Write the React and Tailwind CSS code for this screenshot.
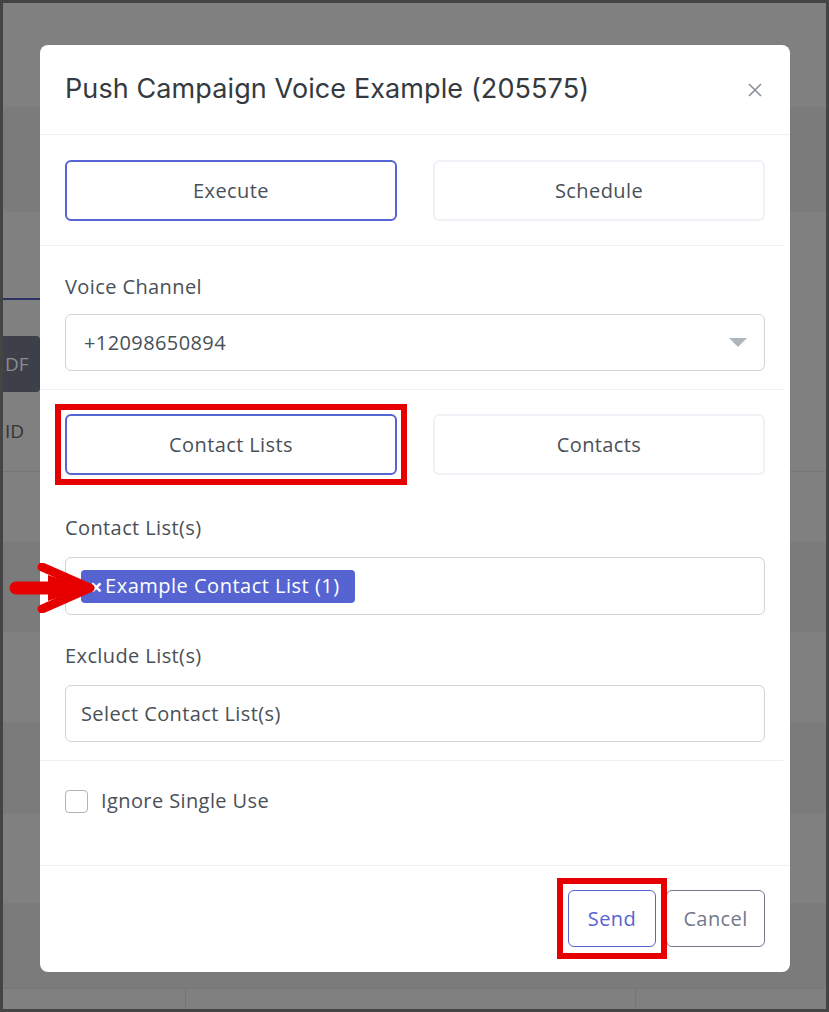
import React from 'react';

const body = { fontFamily: '"Open Sans", "Noto Sans", sans-serif' };

const ToggleButton = ({ label, active }) => (
  <button
    className={`h-[61px] w-[332px] rounded-md border-2 bg-white text-[20px] tracking-[0.4px] text-[#495057] ${
      active ? 'border-[#5664d2]' : 'border-[#eef2f7]'
    }`}
  >
    {label}
  </button>
);

const Background = () => (
  <div className="absolute inset-0 flex flex-col">
    <div className="h-[104px] bg-[#808080]" />
    <div className="h-[105px] bg-[#7b7b7b]" />
    <div className="h-[86px] bg-[#808080]" />
    <div className="h-[2px] w-[37px] bg-[#2c3266]" />
    <div className="h-[36px] bg-[#808080]" />
    <div className="flex h-[56px] w-[37px] items-center rounded-r bg-[#3e4049] pl-[2px] text-[19px] text-[#8c8c8c]" style={body}>
      DF
    </div>
    <div className="flex h-[80px] items-center border-b border-[#767676] bg-[#808080] pl-[2px] text-[19px] text-[#333]" style={body}>
      ID
    </div>
    <div className="h-[70px] bg-[#808080]" />
    <div className="h-[90px] bg-[#7b7b7b]" />
    <div className="h-[90px] bg-[#808080]" />
    <div className="h-[92px] bg-[#7b7b7b]" />
    <div className="h-[89px] bg-[#808080]" />
    <div className="h-[85px] bg-[#7b7b7b]" />
    <div className="flex flex-1 border-t border-[#767676] bg-[#808080]">
      <div className="w-[183px] border-r border-[#767676]" />
      <div className="w-[450px] border-r border-[#767676]" />
    </div>
  </div>
);

const RedArrow = () => (
  <svg className="absolute left-[-58px] top-[5px]" width="90" height="50" viewBox="0 0 90 50">
    <line x1="8" y1="25" x2="70" y2="25" stroke="#e60000" strokeWidth="13" strokeLinecap="round" />
    <path d="M34 4 L82 25 L34 46" fill="none" stroke="#e60000" strokeWidth="9" strokeLinecap="round" strokeLinejoin="round" />
    <path d="M40 12 L78 25 L40 38 Z" fill="#e60000" />
  </svg>
);

export default function App() {
  return (
    <div className="relative h-[1012px] w-[829px] overflow-hidden border-[3px] border-[#444444] bg-[#808080]">
      <Background />

      <div className="absolute left-[37px] top-[42px] flex w-[750px] flex-col rounded-lg bg-white" style={body}>
        {/* Header */}
        <div className="flex h-[90px] items-center justify-between border-b border-[#eef0f3] pl-[25px] pr-[27px]">
          <h2 className="text-[27px] tracking-[0.1px] text-[#343a40]" style={{ fontFamily: 'Inter, "Noto Sans", sans-serif' }}>
            Push Campaign Voice Example (205575)
          </h2>
          <svg width="16" height="16" viewBox="0 0 16 16" className="text-[#8a9099]">
            <path d="M2 2 L14 14 M14 2 L2 14" stroke="currentColor" strokeWidth="1.6" />
          </svg>
        </div>

        {/* Mode */}
        <div className="mx-[25px] flex gap-[36px] pb-[24px] pt-[25px]">
          <ToggleButton label="Execute" active />
          <ToggleButton label="Schedule" />
        </div>
        <div className="mr-[7px] border-t border-[#eef0f3]" />

        {/* Voice channel */}
        <div className="px-[25px] pb-[18px] pt-[26px]">
          <label className="block text-[20px] tracking-[0.4px] text-[#495057]">Voice Channel</label>
          <div className="mt-[12px] flex h-[57px] items-center justify-between rounded-md border border-[#ced4da] pl-[18px] pr-[17px]">
            <span className="text-[20px] tracking-[0.4px] text-[#495057]">+12098650894</span>
            <svg width="18" height="10" viewBox="0 0 18 10">
              <path d="M0 0 H18 L9 9 Z" fill="#adb5bd" />
            </svg>
          </div>
        </div>
        <div className="mr-[7px] border-t border-[#eef0f3]" />

        {/* Target */}
        <div className="mx-[25px] flex gap-[36px] pt-[24px]">
          <div className="relative flex">
            <div className="absolute -inset-[10px] border-[6px] border-[#e60000]" />
            <ToggleButton label="Contact Lists" active />
          </div>
          <ToggleButton label="Contacts" />
        </div>

        <div className="px-[25px] pt-[38px]">
          <label className="block text-[20px] tracking-[0.4px] text-[#495057]">Contact List(s)</label>
          <div className="relative mt-[14px] flex h-[58px] items-center rounded-md border border-[#ced4da] px-[15px]">
            <RedArrow />
            <span className="flex h-[33px] items-center rounded-sm bg-[#5664d2] pl-[9px] pr-[15px] text-[20px] tracking-[0.5px] text-white">
              <span className="mr-[2px] text-[22px] font-bold leading-none">×</span>Example Contact List (1)
            </span>
          </div>

          <label className="mt-[26px] block text-[20px] tracking-[0.4px] text-[#495057]">Exclude List(s)</label>
          <div className="mt-[14px] flex h-[57px] items-center rounded-md border border-[#ced4da] px-[15px]">
            <span className="text-[20px] tracking-[0.4px] text-[#495057]">Select Contact List(s)</span>
          </div>
        </div>
        <div className="mr-[7px] mt-[18px] border-t border-[#eef0f3]" />

        {/* Options */}
        <div className="flex h-[104px] items-start gap-[13px] px-[25px] pt-[28px]">
          <span className="mt-[1px] h-[23px] w-[23px] rounded border border-[#adb5bd] bg-white" />
          <span className="text-[20px] leading-[24px] tracking-[0.4px] text-[#495057]">Ignore Single Use</span>
        </div>

        {/* Footer */}
        <div className="flex justify-end gap-[10px] border-t border-[#eef0f3] px-[25px] pb-[25px] pt-[24px]">
          <div className="relative">
            <div className="absolute -bottom-[12px] -left-[11px] -right-[11px] -top-[12px] border-[6px] border-[#e60000]" />
            <button className="relative h-[57px] w-[88px] rounded-md border border-[#5664d2] bg-white text-[20px] tracking-[0.4px] text-[#5664d2]">
              Send
            </button>
          </div>
          <button className="h-[57px] w-[99px] rounded-md border border-[#74788d] bg-white text-[20px] tracking-[0.4px] text-[#74788d]">
            Cancel
          </button>
        </div>
      </div>
    </div>
  );
}
